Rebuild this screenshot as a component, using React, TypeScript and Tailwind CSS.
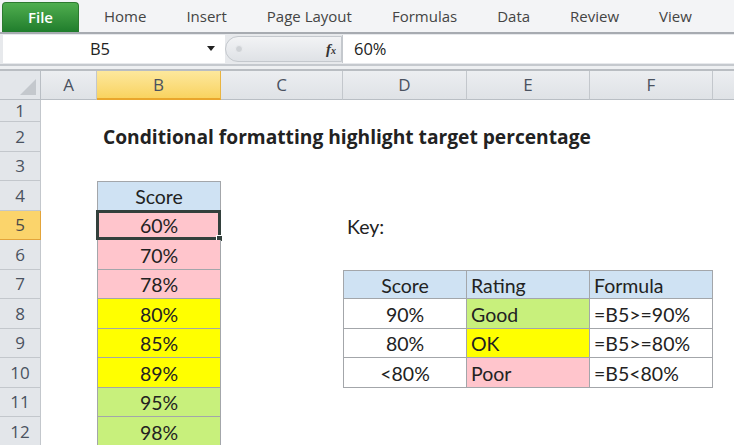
import React from 'react';

type Cell = {
  t?: string;
  bg?: string;
  al?: 'l' | 'c';
  b?: boolean;
  bl?: boolean;
  bt?: boolean;
  bold?: boolean;
  sel?: boolean;
};

const COLS = [
  { key: 'A', w: 'w-[56px]' },
  { key: 'B', w: 'w-[124px]' },
  { key: 'C', w: 'w-[122px]' },
  { key: 'D', w: 'w-[124px]' },
  { key: 'E', w: 'w-[123px]' },
  { key: 'F', w: 'w-[123px]' },
  { key: 'G', w: 'w-[60px]' },
];

const BLUE = 'bg-[#cfe2f3]';
const PINK = 'bg-[#ffc5cc]';
const YELLOW = 'bg-[#ffff00]';
const GREEN = 'bg-[#c8f07c]';

// row number -> cells by column index (0 = A)
const ROWS: { n: number; h: string; cells: Record<number, Cell> }[] = [
  { n: 1, h: 'h-[22px]', cells: {} },
  {
    n: 2,
    h: 'h-[29.5px]',
    cells: { 1: { t: 'Conditional formatting highlight target percentage', al: 'l', bold: true } },
  },
  { n: 3, h: 'h-[29.5px]', cells: {} },
  { n: 4, h: 'h-[29.5px]', cells: { 1: { t: 'Score', bg: BLUE, b: true, bl: true, bt: true } } },
  {
    n: 5,
    h: 'h-[29.5px]',
    cells: { 1: { t: '60%', bg: PINK, b: true, bl: true, sel: true }, 3: { t: 'Key:', al: 'l' } },
  },
  { n: 6, h: 'h-[29.5px]', cells: { 1: { t: '70%', bg: PINK, b: true, bl: true } } },
  {
    n: 7,
    h: 'h-[29.5px]',
    cells: {
      1: { t: '78%', bg: PINK, b: true, bl: true },
      3: { t: 'Score', bg: BLUE, b: true, bl: true, bt: true },
      4: { t: 'Rating', bg: BLUE, b: true, bt: true, al: 'l' },
      5: { t: 'Formula', bg: BLUE, b: true, bt: true, al: 'l' },
    },
  },
  {
    n: 8,
    h: 'h-[29.5px]',
    cells: {
      1: { t: '80%', bg: YELLOW, b: true, bl: true },
      3: { t: '90%', b: true, bl: true },
      4: { t: 'Good', bg: GREEN, b: true, al: 'l' },
      5: { t: '=B5>=90%', b: true, al: 'l' },
    },
  },
  {
    n: 9,
    h: 'h-[29.5px]',
    cells: {
      1: { t: '85%', bg: YELLOW, b: true, bl: true },
      3: { t: '80%', b: true, bl: true },
      4: { t: 'OK', bg: YELLOW, b: true, al: 'l' },
      5: { t: '=B5>=80%', b: true, al: 'l' },
    },
  },
  {
    n: 10,
    h: 'h-[29.5px]',
    cells: {
      1: { t: '89%', bg: YELLOW, b: true, bl: true },
      3: { t: '<80%', b: true, bl: true },
      4: { t: 'Poor', bg: PINK, b: true, al: 'l' },
      5: { t: '=B5<80%', b: true, al: 'l' },
    },
  },
  { n: 11, h: 'h-[29.5px]', cells: { 1: { t: '95%', bg: GREEN, b: true, bl: true } } },
  { n: 12, h: 'h-[29.5px]', cells: { 1: { t: '98%', bg: GREEN, b: true, bl: true } } },
];

const TABS = ['Home', 'Insert', 'Page Layout', 'Formulas', 'Data', 'Review', 'View'];

const SheetCell = ({ cell, w }: { cell?: Cell; w: string }) => {
  const c = cell ?? {};
  const border = c.b
    ? `border-r border-b border-[#a3a6aa] ${c.bl ? 'border-l' : ''} ${c.bt ? 'border-t' : ''}`
    : '';
  return (
    <div
      className={`relative ${w} shrink-0 h-full flex items-center whitespace-nowrap ${
        c.al === 'l' ? 'justify-start pl-[4px]' : 'justify-center'
      } ${c.bg ?? ''} ${border}`}
    >
      {c.t && (
        <span
          className={
            c.bold
              ? "pt-[2px] pl-[2px] font-bold text-[19.2px] font-['Open_Sans',sans-serif]"
              : 'pt-[2px]'
          }
        >
          {c.t}
        </span>
      )}
      {c.sel && (
        <div className="absolute -top-[1px] -left-[2px] -right-[1px] -bottom-[1px] border-[3px] border-[#33403c]">
          <div className="absolute -bottom-[5px] -right-[5px] w-[7px] h-[7px] bg-[#33403c] border border-white" />
        </div>
      )}
    </div>
  );
};

export default function App() {
  return (
    <div className="w-[734px] h-[445px] overflow-hidden bg-white text-[#222] font-['Open_Sans',sans-serif]">
      {/* ribbon tabs */}
      <div className="h-[32px] bg-[#f3f4f6] flex items-end pl-[2px]">
        <div className="w-[77px] h-[30px] rounded-t-[4px] bg-gradient-to-b from-[#4fae4f] to-[#1f7d2c] border border-[#2c7a2f] border-b-0 flex items-center justify-center text-white text-[15px] font-semibold">
          File
        </div>
        <div className="flex h-full items-center text-[15px] text-[#444] ml-[5px]">
          {TABS.map((tab) => (
            <div key={tab} className="px-[20px]">
              {tab}
            </div>
          ))}
        </div>
      </div>
      <div className="h-[2px] bg-[#a7abb1]" />

      {/* formula bar */}
      <div className="h-[30px] bg-[#e7e9ec] flex items-center pl-[3px] py-[1px]">
        <div className="w-[222px] h-[28px] bg-white flex items-center relative">
          <span className="w-full text-center text-[16.5px] text-[#222] pr-[28px]">B5</span>
          <span className="absolute right-[10px] top-[11px] w-0 h-0 border-l-[4px] border-r-[4px] border-t-[5px] border-l-transparent border-r-transparent border-t-[#222]" />
        </div>
        <div className="w-[117px] h-[26px] rounded-l-full bg-gradient-to-b from-[#f2f3f5] to-[#dfe2e6] border border-[#c4c8cd] flex items-center justify-between pl-[9px] pr-[5px]">
          <span className="w-[8px] h-[8px] rounded-full bg-[#cfd2d6] border border-[#e9ebee]" />
          <span className="italic font-bold text-[15px] text-[#333] font-['Liberation_Serif',serif] leading-none">
            f<span className="text-[10px]">x</span>
          </span>
        </div>
        <div className="w-[1px] h-[28px] bg-[#c4c8cd]" />
        <div className="flex-1 h-[28px] bg-white flex items-center pl-[11px] text-[16.5px] text-[#222]">60%</div>
      </div>
      <div className="h-[7px] bg-[#eef0f2] border-t-2 border-[#c5c9ce] border-b-2 border-b-[#b9bdc2]" />

      {/* column headers */}
      <div className="flex h-[29px] text-[17px] text-[#4a5260]">
        <div className="w-[41px] shrink-0 h-full bg-[#e3e6ea] border-r border-b border-[#b9bec4] relative">
          <div className="absolute right-[4px] bottom-[4px] w-0 h-0 border-l-[16px] border-l-transparent border-b-[16px] border-b-[#c4c8cd]" />
        </div>
        {COLS.map((col) => (
          <div
            key={col.key}
            className={`${col.w} shrink-0 h-full flex items-center justify-center border-r ${
              col.key === 'B'
                ? 'bg-gradient-to-b from-[#fde89c] to-[#f9d35f] border-[#e9b441] border-b-2 border-b-[#e9a62c]'
                : 'bg-gradient-to-b from-[#eceef1] to-[#dfe2e6] border-[#c3c7cc] border-b border-b-[#b9bec4]'
            }`}
          >
            {col.key !== 'G' && col.key}
          </div>
        ))}
      </div>

      {/* sheet rows */}
      <div className="font-['Lato',sans-serif] text-[19.5px]">
        {ROWS.map((row) => (
          <div key={row.n} className={`flex ${row.h}`}>
            <div
              className={`w-[41px] shrink-0 h-full flex items-center justify-center text-[17px] font-['Open_Sans',sans-serif] border-r border-b ${
                row.n === 5
                  ? 'bg-[#fbd46b] border-[#e3a43a] text-[#4a4a4a]'
                  : 'bg-[#e3e6ea] border-[#c3c7cc] text-[#4a5260]'
              }`}
            >
              {row.n}
            </div>
            {COLS.map((col, i) => (
              <SheetCell key={col.key} cell={row.cells[i]} w={col.w} />
            ))}
          </div>
        ))}
      </div>
    </div>
  );
}
